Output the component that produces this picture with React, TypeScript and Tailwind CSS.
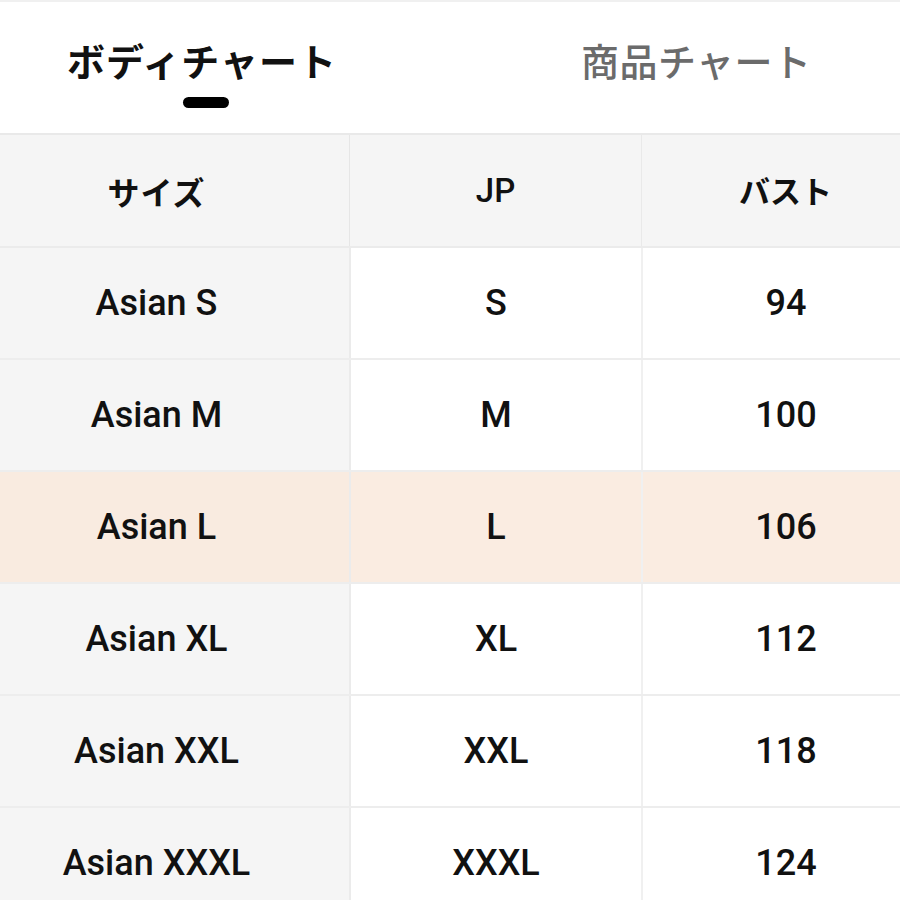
import React from "react";

const rows = [
  { size: "Asian S", jp: "S", bust: "94" },
  { size: "Asian M", jp: "M", bust: "100" },
  { size: "Asian L", jp: "L", bust: "106", hl: true },
  { size: "Asian XL", jp: "XL", bust: "112" },
  { size: "Asian XXL", jp: "XXL", bust: "118" },
  { size: "Asian XXXL", jp: "XXXL", bust: "124" },
];

const latin = { fontFamily: 'Roboto, "Noto Sans CJK JP", sans-serif' };
const cjk = { fontFamily: '"Noto Sans CJK JP", Roboto, sans-serif' };

export default function App() {
  return (
    <div className="w-[900px] h-[900px] overflow-hidden bg-white text-[#111]">
      <div className="h-[2px] bg-[#f0f0f0]" />
      <div className="h-[133px] flex border-b-2 border-[#e9e9e9]" style={cjk}>
        <div className="flex flex-col items-center pl-[67px] pt-[32px]">
          <div className="text-[38px] leading-[52px] font-bold tracking-[1px] text-[#111]">ボディチャート</div>
          <div className="mt-[11px] ml-[8px] w-[46px] h-[11px] rounded-full bg-black" />
        </div>
        <div className="ml-[244px] pt-[32px]">
          <div className="text-[38px] leading-[52px] font-medium tracking-[0.5px] text-[#6b6b6b]">商品チャート</div>
        </div>
      </div>
      <div className="flex flex-col">
        <div className="flex h-[113px] bg-[#f5f5f5] border-b-2 border-[#ebebeb]">
          <div className="w-[349px] pr-[36px] flex items-center justify-center text-[32px] font-bold tracking-[1px]" style={cjk}>サイズ</div>
          <div className="w-[292px] flex items-center justify-center text-[33px] font-medium border-l border-[#e6e6e6]" style={latin}>JP</div>
          <div className="flex-1 pl-[29px] flex items-center justify-center text-[31px] font-bold border-l border-[#e9e9e9]" style={cjk}>バスト</div>
        </div>
        {rows.map((r) => (
          <div
            key={r.size}
            className={`flex h-[112px] border-b-2 border-[#ededed] text-[36px] font-medium ${r.hl ? "bg-[#faece1]" : "bg-white"}`}
            style={latin}
          >
            <div className={`w-[349px] pr-[36px] flex items-center justify-center ${r.hl ? "bg-[#f9ebe0]" : "bg-[#f5f5f5]"}`}>{r.size}</div>
            <div className="w-[292px] flex items-center justify-center border-l-2 border-[#ebebeb]">{r.jp}</div>
            <div className="flex-1 pl-[29px] flex items-center justify-center border-l-2 border-[#f0f0f0]">{r.bust}</div>
          </div>
        ))}
      </div>
    </div>
  );
}
